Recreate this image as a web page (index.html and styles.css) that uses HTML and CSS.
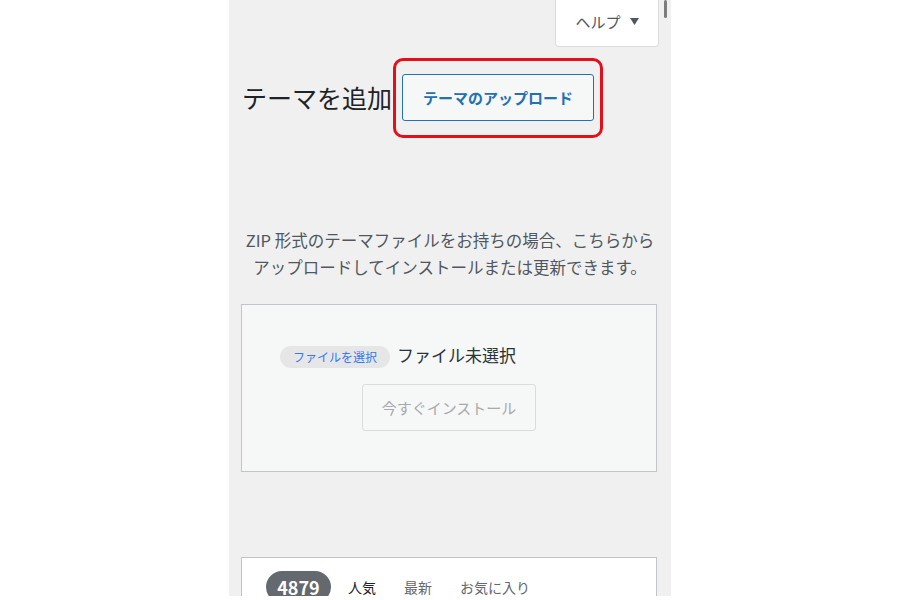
FILE: index.html
```html
<!DOCTYPE html>
<html lang="ja">
<head>
  <meta charset="UTF-8" />
  <meta name="viewport" content="width=device-width, initial-scale=1.0"/>
  <title>テーマを追加</title>
  <link rel="stylesheet" href="styles.css">
</head>
<body>

  <div class="screen">
    <div class="scrollbar"></div>

    <!-- Help tab -->
    <div class="help-row">
      <button class="help-tab">ヘルプ
        <svg class="caret" width="9" height="7" viewBox="0 0 9 7"><path d="M0 0 H9 L4.5 7 Z" fill="#50575e"/></svg>
      </button>
    </div>

    <!-- Heading -->
    <div class="heading-row">
      <h1 class="page-title">テーマを追加</h1>
      <div class="highlight">
        <button class="upload-button">テーマのアップロード</button>
      </div>
    </div>

    <!-- Upload -->
    <p class="upload-help">ZIP 形式のテーマファイルをお持ちの場合、こちらから<br>アップロードしてインストールまたは更新できます。</p>

    <div class="upload-box">
      <div class="file-row">
        <span class="file-button">ファイルを選択</span>
        <span class="file-name">ファイル未選択</span>
      </div>
      <button class="install-button" disabled>今すぐインストール</button>
    </div>

    <!-- Filter bar -->
    <div class="filter-card">
      <span class="count">4879</span>
      <a class="filter current">人気</a>
      <a class="filter">最新</a>
      <a class="filter">お気に入り</a>
    </div>
  </div>

</body>
</html>
```

FILE: styles.css
```css
body {
  margin: 0;
  background-color: #ffffff;
  font-family: "Noto Sans CJK JP", "Noto Sans", sans-serif;
  color: #1d2327;
}

.screen {
  position: relative;
  width: 442px;
  height: 596px;
  margin: 0 auto;
  overflow: hidden;
  background-color: #f0f0f1;
}

.scrollbar {
  position: absolute;
  top: 0;
  right: 4px;
  width: 3px;
  height: 18px;
  border-radius: 2px;
  background-color: #7c7c7c;
}

.help-row {
  display: flex;
  justify-content: flex-end;
  padding-right: 12px;
}

.help-tab {
  display: flex;
  align-items: center;
  justify-content: center;
  gap: 9px;
  width: 104px;
  height: 47px;
  padding: 0 0 3px;
  background-color: #ffffff;
  border: 1px solid #dcdcde;
  border-top: none;
  border-radius: 0 0 4px 4px;
  font-family: inherit;
  font-size: 15px;
  color: #50575e;
}

.heading-row {
  display: flex;
  align-items: center;
  gap: 1px;
  padding-left: 13px;
  margin-top: 11px;
}

.page-title {
  margin: 0;
  font-size: 25px;
  font-weight: 400;
  color: #1d2327;
  padding-bottom: 3px;
}

.highlight {
  padding: 13px 6px 14px;
  border: 3px solid #e3101a;
  border-radius: 10px;
}

.upload-button {
  display: block;
  width: 192px;
  height: 47px;
  background-color: #f6f7f7;
  border: 1px solid #2271b1;
  border-radius: 3px;
  font-family: inherit;
  font-size: 15px;
  font-weight: 700;
  color: #2271b1;
}

.upload-help {
  margin: 89px 0 23px;
  padding: 0 6px;
  text-align: center;
  font-size: 16.5px;
  line-height: 27px;
  color: #50575e;
}

.upload-box {
  display: flex;
  flex-direction: column;
  align-items: center;
  gap: 16px;
  width: 414px;
  margin-left: 12px;
  padding: 36px 0 40px;
  background-color: #f6f7f7;
  border: 1px solid #c3c4c7;
}

.file-row {
  display: flex;
  align-items: center;
  gap: 7px;
  align-self: flex-start;
  padding-left: 38px;
}

.file-button {
  display: inline-block;
  padding: 0 13px;
  height: 22px;
  line-height: 22px;
  border-radius: 11px;
  background-color: #e6e6e7;
  font-size: 12px;
  color: #3478f6;
  margin-top: 5px;
}

.file-name {
  font-size: 17px;
  color: #2c3338;
}

.install-button {
  width: 174px;
  height: 47px;
  background-color: #f6f7f7;
  border: 1px solid #dcdcde;
  border-radius: 3px;
  font-family: inherit;
  font-size: 15px;
  color: #a7aaad;
}

.filter-card {
  display: flex;
  align-items: center;
  gap: 28px;
  width: 390px;
  margin: 85px 0 0 12px;
  padding: 13px 0 0 24px;
  background-color: #ffffff;
  border: 1px solid #c3c4c7;
}

.count {
  display: inline-block;
  width: 65px;
  height: 32px;
  line-height: 32px;
  margin-right: -11px;
  border-radius: 16px;
  background-color: #646970;
  color: #ffffff;
  text-align: center;
  font-size: 18px;
  font-weight: 700;
}

.filter {
  font-size: 14px;
  color: #646970;
}

.filter.current {
  color: #1d2327;
}
```
